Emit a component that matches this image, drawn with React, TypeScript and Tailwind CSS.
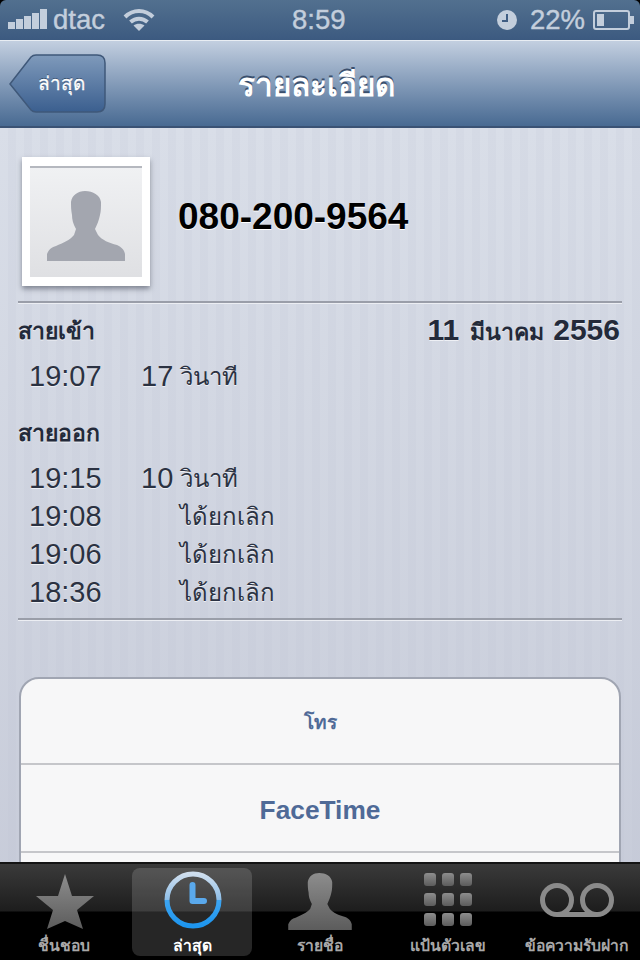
const thai = "font-['Liberation_Sans','Noto_Sans','DejaVu_Sans',sans-serif]";
const personPath =
  "M0 70V63C2 58 5 56 9 55C16 52 23 49 27 44L29 38C26 33 25 28 25 24C24 19 24 15 24 11C25 4 31 0 38 0C46 0 53 4 54 11C54 16 54 20 53 24C52 29 50 34 48 38L51 44C55 49 62 52 70 54C74 56 77 58 78 63V70Z";

const calls = [
  { time: "19:15", dur: "10", unit: "วินาที" },
  { time: "19:08", dur: "", unit: "ได้ยกเลิก" },
  { time: "19:06", dur: "", unit: "ได้ยกเลิก" },
  { time: "18:36", dur: "", unit: "ได้ยกเลิก" },
];

function CallRow({ time, dur, unit }: { time: string; dur: string; unit: string }) {
  return (
    <div className="flex h-[38px] items-center pl-[11px] text-[29px] text-[#2b3242] [text-shadow:0_1px_0_#eef0f5]">
      <span className="w-[112px]">{time}</span>
      <span className="w-[39px]">{dur}</span>
      <span className="text-[24px]">{unit}</span>
    </div>
  );
}

function StatusBar() {
  return (
    <div className="relative flex h-[40px] shrink-0 items-center justify-between rounded-t-[6px] bg-gradient-to-b from-[#52708f] to-[#3c5a80] pl-2 pr-[5px] text-[27.500px] text-[#c3cedc] [-webkit-text-stroke:0.4px_#c3cedc]">
      <div className="flex items-center">
        <svg width="39" height="24" viewBox="0 0 39 24" fill="#c3cedc">
          <rect x="0" y="14" width="7" height="7" />
          <rect x="8" y="11" width="7" height="10" />
          <rect x="16" y="8" width="7" height="13" />
          <rect x="24" y="5" width="7" height="16" />
          <rect x="32" y="1" width="7" height="20" />
        </svg>
        <span className="ml-[6px]">dtac</span>
        <svg className="ml-[18px]" width="32" height="24" viewBox="0 0 32 24" fill="none" stroke="#c3cedc" strokeWidth="4">
          <path d="M2 9C10 1 22 1 30 9" />
          <path d="M7.500 14C12.500 9.500 19.500 9.500 24.500 14" />
          <path d="M16 23l-5.500-5.500c3-2.500 8-2.500 11 0z" fill="#c3cedc" stroke="none" />
        </svg>
      </div>
      <span className="absolute left-[292px]">8:59</span>
      <div className="flex items-center">
        <svg width="20" height="20" viewBox="0 0 20 20">
          <circle cx="10" cy="10" r="10" fill="#c3cedc" />
          <path d="M10 4v7H5" fill="none" stroke="#3f5d83" strokeWidth="2" />
        </svg>
        <span className="ml-[13px]">22%</span>
        <svg className="ml-[8px]" width="42" height="22" viewBox="0 0 42 22" fill="none">
          <rect x="1" y="2" width="35" height="18" rx="2" stroke="#c3cedc" strokeWidth="2" />
          <rect x="4" y="5" width="7" height="12" fill="#c3cedc" />
          <rect x="37" y="7" width="4" height="8" fill="#c3cedc" />
        </svg>
      </div>
    </div>
  );
}

function NavBar() {
  return (
    <div className="relative flex h-[88px] shrink-0 items-center border-t border-t-[#e8edf3] border-b-2 border-b-[#3a5274] bg-gradient-to-b from-[#c3cfe0] to-[#486a92] pl-[10px]">
      <svg className="absolute left-[9px] top-[13px]" width="98" height="60" viewBox="0 0 98 60">
        <defs>
          <linearGradient id="back" x1="0" y1="0" x2="0" y2="1">
            <stop offset="0" stopColor="#7f9abb" />
            <stop offset="1" stopColor="#3b5f8f" />
          </linearGradient>
        </defs>
        <path d="M1 30 22 3C24 1 25 1 27 1H88C93 1 96 4 96 9V50C96 55 93 58 88 58H27C25 58 24 58 22 56Z" fill="url(#back)" stroke="#3f5879" strokeWidth="1.500" />
      </svg>
      <span className={`${thai} relative ml-[28px] pt-[2px] text-[19px] text-white [text-shadow:0_-1px_0_#2c4566] [-webkit-text-stroke:0.3px_#fff]`}>ล่าสุด</span>
      <span className={`${thai} absolute left-[238px] pt-[5px] text-[31.500px] font-bold text-white [text-shadow:0_-2px_0_#3a4f6d]`}>รายละเอียด</span>
    </div>
  );
}

function Divider({ className }: { className?: string }) {
  return <div className={`mx-[18px] h-[3px] border-t-2 border-[#9a9ea9] bg-[#eceef3] ${className ?? ""}`} />;
}

function Detail() {
  return (
    <div className="h-full overflow-hidden bg-[linear-gradient(rgba(186,190,206,0),rgba(186,190,206,0.55)),repeating-linear-gradient(90deg,#d9dee8_0,#d9dee8_8px,#d5dae5_8px,#d5dae5_16px)] pt-[29px]">
      <div className="flex items-center pl-[22px]">
        <div className="h-[129px] w-[128px] shrink-0 bg-white px-2 py-[9px] shadow-[0_3px_5px_rgba(60,65,80,0.55)]">
          <div className="flex h-full w-full items-end justify-center border-t-2 border-t-[#b5b8bf] bg-gradient-to-b from-[#f0f1f3] to-[#dfe0e3] pb-[16px]">
            <svg width="78" height="70" viewBox="0 0 78 70" fill="#a3a6af">
              <path d={personPath} />
            </svg>
          </div>
        </div>
        <span className="mb-[10px] ml-[28px] text-[37px] font-bold text-black [text-shadow:0_1px_0_#fff]">080-200-9564</span>
      </div>

      <Divider className="mt-[15px]" />
      <div className="mx-[18px]">
        <div className="flex h-[55px] items-center justify-between pr-[2px] text-[#232a3a] [text-shadow:0_1px_0_#eef0f5]">
          <span className={`${thai} text-[23px] font-bold`}>สายเข้า</span>
          <span className={`${thai} mb-[4px] flex items-baseline text-[23px] font-bold`}>
            <span className="text-[30px]">11</span>
            <span className="ml-[11px]">มีนาคม</span>
            <span className="ml-[9px] text-[30px]">2556</span>
          </span>
        </div>
        <div className="-mt-[1px]">
          <CallRow time="19:07" dur="17" unit="วินาที" />
        </div>
        <div className={`${thai} mt-[20px] h-[44px] text-[23px] font-bold text-[#232a3a] [text-shadow:0_1px_0_#eef0f5]`}>สายออก</div>
        {calls.map((c) => (
          <CallRow key={c.time} {...c} />
        ))}
      </div>

      <Divider className="mt-[6px]" />

      <div className="mx-[19px] mt-[56px] rounded-[20px] border-2 border-[#a0a5b2] bg-[#f7f7f8]">
        <div className="flex h-[86px] items-center justify-center border-b-2 border-[#c5c6ca] pt-[5px] text-[19px] font-bold text-[#4f6a97]">โทร</div>
        <div className="flex h-[88px] items-center justify-center border-b-2 border-[#c5c6ca] pt-[5px] text-[26.300px] font-bold text-[#4f6a97]">FaceTime</div>
        <div className="h-[88px]" />
      </div>
    </div>
  );
}

function Tab({ label, active, children }: { label: string; active?: boolean; children: React.ReactNode }) {
  return (
    <div className={`flex h-[88px] w-[120px] flex-col items-center justify-between rounded-[8px] pt-[2px] ${active ? "bg-white/15" : ""}`}>
      <div className="flex h-[60px] items-center">{children}</div>
      <span className={`${thai} whitespace-nowrap text-[15.700px] font-bold leading-[20px] ${active ? "text-white" : "text-[#a8a8a8]"}`}>{label}</span>
    </div>
  );
}

function TabBar() {
  return (
    <div className="flex h-[98px] shrink-0 items-center justify-center gap-[8px] border-t-2 border-t-[#141414] bg-[linear-gradient(#3a3a3a,#1d1d1d_47px,#000_48px,#000)]">
      <Tab label="ชื่นชอบ">
        <svg className="mt-[4px] ml-[2px]" width="58" height="56" viewBox="0 0 58 56">
          <defs>
            <linearGradient id="grey" x1="0" y1="0" x2="0" y2="1">
              <stop offset="0" stopColor="#8d8d8d" />
              <stop offset="1" stopColor="#5c5c5c" />
            </linearGradient>
          </defs>
          <path d="M29 0 36 22H58L41 36 47 55 29 47 11 55 17 36 0 22H22Z" fill="url(#grey)" />
        </svg>
      </Tab>
      <Tab label="ล่าสุด" active>
        <svg className="ml-[2px]" width="60" height="60" viewBox="0 0 60 60" fill="none">
          <defs>
            <linearGradient id="blue" x1="0" y1="0" x2="0" y2="1">
              <stop offset="0" stopColor="#cfdeee" />
              <stop offset="0.49" stopColor="#8fbfe8" />
              <stop offset="0.5" stopColor="#3ea6f2" />
              <stop offset="1" stopColor="#1d95ee" />
            </linearGradient>
          </defs>
          <circle cx="30" cy="30" r="26" stroke="url(#blue)" strokeWidth="5" />
          <path d="M29.500 15V31H41" stroke="#5aa9ec" strokeWidth="6" strokeLinecap="round" strokeLinejoin="round" />
        </svg>
      </Tab>
      <Tab label="รายชื่อ">
        <svg className="mt-[2px]" width="64" height="57" viewBox="0 0 78 70" fill="url(#grey)">
          <path d={personPath} />
        </svg>
      </Tab>
      <Tab label="แป้นตัวเลข">
        <svg width="50" height="54" viewBox="0 0 50 54" fill="url(#grey)">
          {[0, 18, 36].map((x) =>
            [0, 20, 40].map((y) => <rect key={`${x}-${y}`} x={x + 1} y={y} width="12" height="13" rx="3" />),
          )}
        </svg>
      </Tab>
      <Tab label="ข้อความรับฝาก">
        <svg className="ml-[2px]" width="74" height="34" viewBox="0 0 74 34" fill="none" stroke="#8a8a8a" strokeWidth="5">
          <circle cx="17" cy="17" r="14.500" />
          <circle cx="57" cy="17" r="14.500" />
          <path d="M17 31.500H57" />
        </svg>
      </Tab>
    </div>
  );
}

export default function App() {
  return (
    <div className="flex h-[960px] w-[640px] flex-col overflow-hidden bg-black font-['Liberation_Sans',sans-serif]">
      <StatusBar />
      <NavBar />
      <div className="min-h-0 flex-1">
        <Detail />
      </div>
      <TabBar />
    </div>
  );
}
